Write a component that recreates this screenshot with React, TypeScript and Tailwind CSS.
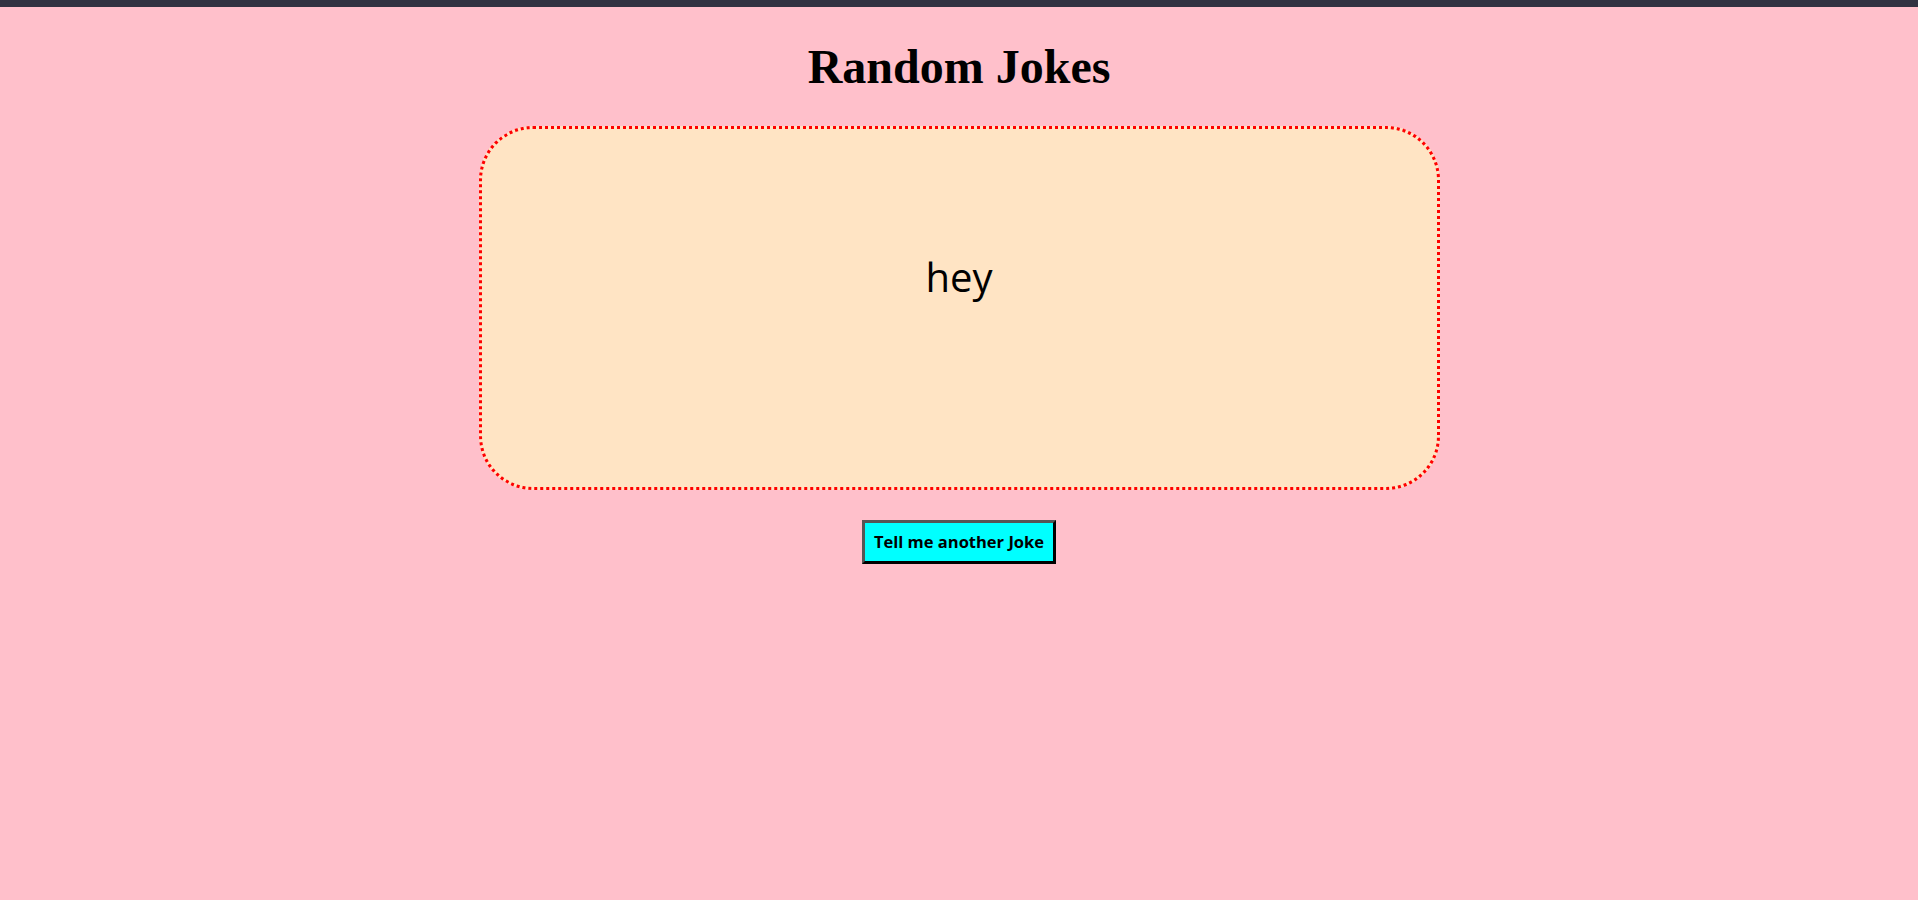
export default function App() {
  return (
    <div className="min-h-[900px] bg-[#ffc0cb]">
      <div className="h-[7px] bg-[#313342]" />
      <div className="flex flex-col items-center">
        <h1 className="mt-[32px] text-[48px] leading-[56px] font-bold text-black [font-family:'Liberation_Serif',serif]">
          Random Jokes
        </h1>
        <div className="mt-[31px] flex h-[364px] w-[961px] justify-center rounded-[54px] border-[3px] border-dotted border-[#ff0000] bg-[#ffe4c4] pt-[121px]">
          <p className="text-[40px] leading-[54px] text-black [font-family:'Open_Sans',sans-serif]">hey</p>
        </div>
        <button className="mt-[30px] flex h-[44px] w-[194px] items-center justify-center border-[3px] border-t-[#555555] border-l-[#555555] border-r-black border-b-black bg-[#00ffff] text-[16.5px] font-bold text-black [font-family:'Open_Sans',sans-serif]">
          Tell me another Joke
        </button>
      </div>
    </div>
  )
}
